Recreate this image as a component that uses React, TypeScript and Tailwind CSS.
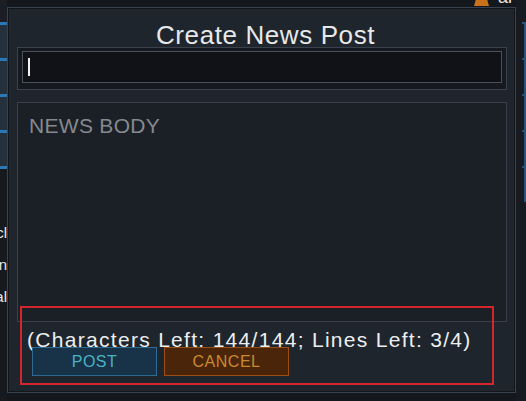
import React from 'react';

const font = { fontFamily: '"Liberation Sans", Arial, sans-serif' };

const LeftTabs = () => (
  <div className="absolute left-0 top-0 w-[7px] h-full flex flex-col bg-[#16191e]">
    <div className="h-[22px] bg-[#1b1f25]" />
    {[0, 1, 2, 3].map((i) => (
      <div key={i} className="h-[36px] border-t-[3px] border-[#2a78b6] bg-[#24313d]" />
    ))}
    <div className="h-[3px] bg-[#2a78b6]" />
    <div className="flex flex-col gap-[12px] mt-[54px] text-[15px] text-[#e8e8e8] leading-[20px]">
      <div className="flex justify-end overflow-hidden whitespace-nowrap">cl</div>
      <div className="flex justify-end overflow-hidden whitespace-nowrap">n</div>
      <div className="flex justify-end overflow-hidden whitespace-nowrap">al</div>
    </div>
  </div>
);

const RightTabs = () => (
  <div className="absolute right-0 top-0 w-[10px] h-full flex flex-col items-end bg-[#171b21]">
    <div className="h-[22px]" />
    {[0, 1, 2, 3, 4].map((i) => (
      <div key={i} className="h-[36px] w-[4px] border-t-[2px] border-r-[2px] border-[#24557d]" />
    ))}
  </div>
);

export default function App() {
  return (
    <div className="relative w-[526px] h-[401px] overflow-hidden bg-[#14171c]" style={font}>
      <LeftTabs />
      <RightTabs />

      {/* background window peeking above the dialog */}
      <div className="absolute left-[473px] top-[-13px] flex items-end gap-[8px]">
        <svg width="17" height="19" viewBox="0 0 17 19">
          <circle cx="8.5" cy="6" r="4" fill="#c8721c" />
          <path d="M1 19 L3 12 Q8.5 9 14 12 L16 19 Z" fill="#c8721c" />
        </svg>
        <span className="text-[18px] leading-[18px] text-[#e8e8e8]">al</span>
      </div>

      {/* dialog */}
      <div className="absolute left-[7px] top-[7px] w-[509px] h-[386px] border border-[#374350] bg-[#1f252c] shadow-[inset_0_0_0_1px_#12161b] flex flex-col px-[9px]">
        <div className="h-[39px] flex items-end justify-center pl-[8px]">
          <span className="text-[26px] leading-[24px] tracking-[0.6px] text-[#e6e8ea]">Create News Post</span>
        </div>

        <div className="w-[490px] h-[43px] border border-[#3b424c] bg-[#161a20] pt-[3px] px-[4px]">
          <div className="h-[32px] border border-[#4a5059] bg-[#101217] flex items-center pl-[5px]">
            <div className="w-[2px] h-[18px] bg-[#f2f2f2]" />
          </div>
        </div>

        <div className="w-[490px] h-[220px] mt-[12px] border border-[#3a414b] bg-[#1b1f26] px-[11px] pt-[12px]">
          <div className="text-[21px] leading-[21px] tracking-[0.3px] text-[#858a90]">NEWS BODY</div>
        </div>

        <div className="mt-[7px] pl-[10px] text-[21px] leading-[21px] tracking-[1.3px] text-[#eceef0] whitespace-nowrap">
          (Characters Left: 144/144; Lines Left: 3/4)
        </div>

        <div className="flex gap-[7px] mt-[-3px] ml-[15px]">
          <button className="w-[125px] h-[29px] border border-[#2e6b92] bg-[#183248] text-[16px] tracking-[0.5px] text-[#4ab3c3] flex items-center justify-center">
            POST
          </button>
          <button className="w-[125px] h-[29px] border border-[#9c4d10] bg-[#4b2509] text-[16px] tracking-[0.5px] text-[#c98a2e] flex items-center justify-center">
            CANCEL
          </button>
        </div>
      </div>

      {/* red highlight overlay */}
      <div className="absolute left-[20px] top-[306px] w-[474px] h-[79px] border-2 border-[#d4252c] pointer-events-none" />
    </div>
  );
}
